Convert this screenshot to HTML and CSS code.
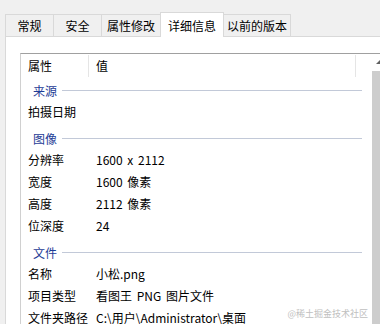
FILE: index.html
```html
<!DOCTYPE html>
<html lang="zh-CN">
<head>
  <meta charset="UTF-8">
  <title>属性 - 详细信息</title>
  <link rel="stylesheet" href="styles.css">
</head>
<body>
  <div class="tabs">
    <div class="tab w48">常规</div>
    <div class="tab w48">安全</div>
    <div class="tab w59">属性修改</div>
    <div class="tab active w64">详细信息</div>
    <div class="tab w67">以前的版本</div>
  </div>

  <div class="panel">
    <div class="listbox">
      <div class="list">
        <div class="head">
          <div class="hcol name">属性</div>
          <div class="hcol value">值</div>
        </div>

        <div class="group first"><span>来源</span><i></i></div>
        <div class="row"><div class="name">拍摄日期</div><div class="value"></div></div>

        <div class="group"><span>图像</span><i></i></div>
        <div class="row"><div class="name">分辨率</div><div class="value">1600 x 2112</div></div>
        <div class="row"><div class="name">宽度</div><div class="value">1600 像素</div></div>
        <div class="row"><div class="name">高度</div><div class="value">2112 像素</div></div>
        <div class="row"><div class="name">位深度</div><div class="value">24</div></div>

        <div class="group"><span>文件</span><i></i></div>
        <div class="row"><div class="name">名称</div><div class="value">小松.png</div></div>
        <div class="row"><div class="name">项目类型</div><div class="value">看图王 PNG 图片文件</div></div>
        <div class="row"><div class="name">文件夹路径</div><div class="value">C:\用户\Administrator\桌面</div></div>
      </div>
      <div class="scrollbar">
        <div class="arrow"></div>
        <div class="thumb"></div>
      </div>
    </div>
  </div>

  <div class="watermark">@稀土掘金技术社区</div>
</body>
</html>
```

FILE: styles.css
```css
body {
  margin: 0;
  background: #f0f0f0;
  font-family: "Noto Sans CJK SC", "Noto Sans", sans-serif;
  font-size: 12px;
  color: #000;
  width: 380px;
  height: 324px;
  overflow: hidden;
  position: relative;
}
.tabs {
  display: flex;
  align-items: flex-end;
  height: 36px;
  padding-left: 5px;
}
.tab {
  box-sizing: border-box;
  height: 22px;
  line-height: 21px;
  text-align: center;
  border: 1px solid #d9d9d9;
  border-bottom: none;
  border-right: none;
  background: #f0f0f0;
}
.tab:last-child {
  border-right: 1px solid #d9d9d9;
}
.tab.active {
  height: 25px;
  line-height: 25px;
  background: #fff;
  margin-bottom: -1px;
  position: relative;
  border-right: 1px solid #d9d9d9;
}
.tab.active + .tab {
  border-left: none;
}
.w48 { width: 48px; }
.w59 { width: 59px; }
.w64 { width: 64px; }
.w67 { width: 67px; }

.panel {
  background: #fff;
  margin-left: 5px;
  border-top: 1px solid #d9d9d9;
  border-left: 1px solid #d9d9d9;
  height: 300px;
  padding: 16px 0 0 14px;
  overflow: hidden;
}
.listbox {
  display: flex;
  width: 400px;
  border-top: 1px solid #a0a0a0;
  border-left: 1px solid #d0d0d0;
  height: 290px;
}
.list {
  width: 351px;
  flex: none;
}
.head {
  display: flex;
  height: 25px;
  line-height: 24px;
}
.hcol {
  border-right: 1px solid #e5e5e5;
  margin: 1px 0 2px;
  line-height: 22px;
}
.name {
  width: 68px;
  padding-left: 7px;
  flex: none;
}
.value {
  word-spacing: 2px;
}
.head .value {
  width: 259px;
  padding-left: 7px;
}
.head .name {
  width: 60px;
}
.row {
  display: flex;
  height: 22px;
  line-height: 22px;
}
.group {
  display: flex;
  align-items: center;
  height: 22px;
  margin-top: 4px;
  padding-left: 12px;
  color: #1e3c96;
}
.group.first {
  margin-top: 0;
}
.group i {
  flex: 1;
  height: 1px;
  background: #c2c9d8;
  margin: 0 10px 0 5px;
}
.scrollbar {
  width: 17px;
  flex: none;
  background: #f0f0f0;
  display: flex;
  flex-direction: column;
}
.arrow {
  height: 17px;
  width: 17px;
  background: #fff;
  position: relative;
}
.arrow::after {
  content: "";
  position: absolute;
  left: 4px;
  top: 6px;
  border-left: 4px solid transparent;
  border-right: 4px solid transparent;
  border-bottom: 4px solid #606060;
}
.thumb {
  width: 17px;
  flex: 1;
  background: #cdcdcd;
}
.watermark {
  position: absolute;
  right: 12px;
  bottom: 4px;
  font-size: 9px;
  color: #c0c0c0;
  font-family: "Noto Sans CJK SC", sans-serif;
}
```
